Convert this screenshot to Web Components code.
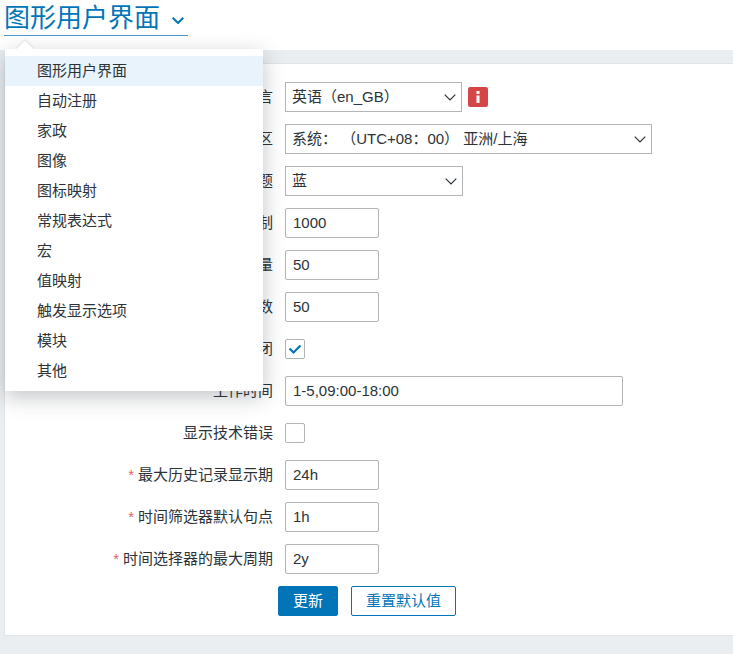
<!DOCTYPE html>
<html lang="zh">
<head>
<meta charset="utf-8">
<title>图形用户界面</title>
<style>
   html, body { margin: 0; height: 100%; }
   body {
      background-color: #ebeef0;
      color: #2b3338;
      font: 15px/18px "Liberation Sans", "Noto Sans CJK SC", sans-serif;
      overflow: hidden;
   }
</style>
</head>
<body>
<zbx-page>
   <zbx-header slot="header">图形用户界面</zbx-header>
   <zbx-menu slot="menu">
      <zbx-menu-item selected>图形用户界面</zbx-menu-item>
      <zbx-menu-item>自动注册</zbx-menu-item>
      <zbx-menu-item>家政</zbx-menu-item>
      <zbx-menu-item>图像</zbx-menu-item>
      <zbx-menu-item>图标映射</zbx-menu-item>
      <zbx-menu-item>常规表达式</zbx-menu-item>
      <zbx-menu-item>宏</zbx-menu-item>
      <zbx-menu-item>值映射</zbx-menu-item>
      <zbx-menu-item>触发显示选项</zbx-menu-item>
      <zbx-menu-item>模块</zbx-menu-item>
      <zbx-menu-item>其他</zbx-menu-item>
   </zbx-menu>

   <zbx-row label="默认语言">
      <zbx-select width="177" value="英语（en_GB）"></zbx-select>
      <zbx-info></zbx-info>
   </zbx-row>
   <zbx-row label="默认时区">
      <zbx-select width="367" value="系统： （UTC+08：00） 亚洲/上海"></zbx-select>
   </zbx-row>
   <zbx-row label="默认主题">
      <zbx-select width="178" value="蓝"></zbx-select>
   </zbx-row>
   <zbx-row label="搜索数量限制" required>
      <zbx-input width="94" value="1000"></zbx-input>
   </zbx-row>
   <zbx-row label="最大显示数量" required>
      <zbx-input width="94" value="50"></zbx-input>
   </zbx-row>
   <zbx-row label="最大元素数" required>
      <zbx-input width="94" value="50"></zbx-input>
   </zbx-row>
   <zbx-row label="显示服务器关闭">
      <zbx-check checked></zbx-check>
   </zbx-row>
   <zbx-row label="工作时间" required>
      <zbx-input width="338" value="1-5,09:00-18:00"></zbx-input>
   </zbx-row>
   <zbx-row label="显示技术错误">
      <zbx-check></zbx-check>
   </zbx-row>
   <zbx-row label="最大历史记录显示期" required>
      <zbx-input width="94" value="24h"></zbx-input>
   </zbx-row>
   <zbx-row label="时间筛选器默认句点" required>
      <zbx-input width="94" value="1h"></zbx-input>
   </zbx-row>
   <zbx-row label="时间选择器的最大周期" required>
      <zbx-input width="94" value="2y"></zbx-input>
   </zbx-row>
   <zbx-row>
      <zbx-button primary>更新</zbx-button>
      <zbx-button>重置默认值</zbx-button>
   </zbx-row>
</zbx-page>

<script>
const chevron = (width, height, color, stroke) => `
   <svg width="${width}" height="${height}" viewBox="0 0 ${width} ${height}" fill="none" aria-hidden="true">
      <path d="M.7 .7 L${width / 2} ${height - 1} L${width - .7} .7" stroke="${color}" stroke-width="${stroke}"/>
   </svg>`;

class ZbxPage extends HTMLElement {
   constructor() {
      super();
      this.attachShadow({mode: 'open'}).innerHTML = `
      <style>
         :host { display: block; position: relative; height: 654px; }
         .card {
            display: flex;
            flex-direction: column;
            gap: 12px;
            margin: 13px 0 0 4px;
            height: 553px;
            padding: 18px 0 0;
            background-color: #fff;
            border: 1px solid #dfe4e7;
            border-right: none;
         }
      </style>
      <slot name="header"></slot>
      <div class="card"><slot></slot></div>
      <slot name="menu"></slot>`;
   }
}

class ZbxHeader extends HTMLElement {
   constructor() {
      super();
      this.attachShadow({mode: 'open'}).innerHTML = `
      <style>
         :host { display: block; height: 50px; background-color: #fff; box-sizing: border-box; padding-left: 4px; }
         a {
            display: inline-flex;
            align-items: center;
            gap: 12px;
            height: 36px;
            box-sizing: border-box;
            padding: 0 4px 0 0;
            color: #0275b8;
            border-bottom: 1px solid #4b9bcb;
            font-size: 26px;
            line-height: 36px;
         }
         svg { margin-top: 6px; }
      </style>
      <a><slot></slot>${chevron(12, 7, '#0275b8', 2)}</a>`;
   }
}

class ZbxMenu extends HTMLElement {
   constructor() {
      super();
      this.attachShadow({mode: 'open'}).innerHTML = `
      <style>
         :host {
            display: block;
            position: absolute;
            left: 5px;
            top: 49px;
            width: 258px;
            padding: 7px 0 5px;
            background-color: #fff;
            box-shadow: 0 6px 20px rgba(31, 44, 51, .28);
         }
         .arrow {
            position: absolute;
            left: 14px;
            top: -6px;
            width: 12px;
            height: 12px;
            background-color: #fff;
            transform: rotate(45deg);
            box-shadow: -1px -1px 2px rgba(31, 44, 51, .1);
         }
      </style>
      <div class="arrow"></div>
      <slot></slot>`;
   }
}

class ZbxMenuItem extends HTMLElement {
   constructor() {
      super();
      this.attachShadow({mode: 'open'}).innerHTML = `
      <style>
         :host { display: block; position: relative; height: 30px; padding-left: 32px; line-height: 29px; }
         :host([selected]) { background-color: #e8f3fb; }
      </style>
      <slot></slot>`;
   }
}

class ZbxRow extends HTMLElement {
   constructor() {
      super();
      this.attachShadow({mode: 'open'}).innerHTML = `
      <style>
         :host { display: flex; align-items: center; height: 30px; }
         label { flex: 0 0 268px; padding-right: 12px; text-align: right; white-space: nowrap; }
         i { font-style: normal; color: #e5646a; margin-right: 4px; }
         .field { display: flex; align-items: center; gap: 6px; }
      </style>
      <label></label>
      <div class="field"><slot></slot></div>`;
   }

   connectedCallback() {
      let label = this.shadowRoot.querySelector('label');
      if (this.hasAttribute('required')) {
         label.innerHTML = '<i>*</i>';
      }
      label.append(this.getAttribute('label') || '');
      if (!this.hasAttribute('label')) {
         this.shadowRoot.querySelector('.field').style.cssText = 'gap: 13px; margin-left: -7px;';
      }
   }
}

class ZbxSelect extends HTMLElement {
   constructor() {
      super();
      this.attachShadow({mode: 'open'}).innerHTML = `
      <style>
         :host { display: flex; align-items: center; justify-content: space-between; box-sizing: border-box; height: 30px; padding: 0 5px 0 6px; background: #fff; border: 1px solid #b0b4b6; white-space: pre; }
         svg { margin-top: 1px; }
      </style>
      <span></span>${chevron(12, 7, '#2b3338', 1.2)}`;
   }

   connectedCallback() {
      this.style.width = this.getAttribute('width') + 'px';
      this.shadowRoot.querySelector('span').textContent = this.getAttribute('value');
   }
}

class ZbxInput extends HTMLElement {
   constructor() {
      super();
      this.attachShadow({mode: 'open'}).innerHTML = `
      <style>
         :host { display: block; box-sizing: border-box; height: 30px; padding: 0 7px; background: #fff; border: 1px solid #b0b4b6; border-radius: 2px; line-height: 28px; }
      </style>
      <span></span>`;
   }

   connectedCallback() {
      this.style.width = this.getAttribute('width') + 'px';
      this.shadowRoot.querySelector('span').textContent = this.getAttribute('value');
   }
}

class ZbxCheck extends HTMLElement {
   constructor() {
      super();
      this.attachShadow({mode: 'open'}).innerHTML = `
      <style>
         :host { display: block; box-sizing: border-box; width: 20px; height: 20px; background: #fff; border: 1px solid #b0b4b6; border-radius: 2px; }
         svg { display: none; }
         :host([checked]) svg { display: block; }
      </style>
      <svg width="18" height="18" viewBox="0 0 18 18" fill="none" aria-hidden="true">
         <path d="M3.5 8.5 L7.5 12.5 L14.5 5.5" stroke="#0275b8" stroke-width="2.2"/>
      </svg>`;
   }
}

class ZbxInfo extends HTMLElement {
   constructor() {
      super();
      this.attachShadow({mode: 'open'}).innerHTML = `
      <style>
         :host { display: block; width: 20px; height: 20px; border-radius: 2px; background: #d64545; }
         svg { display: block; }
      </style>
      <svg width="20" height="20" viewBox="0 0 20 20" fill="#fff" aria-hidden="true">
         <rect x="8.5" y="4" width="3" height="3"/>
         <rect x="8.5" y="8.5" width="3" height="7.5"/>
      </svg>`;
   }
}

class ZbxButton extends HTMLElement {
   constructor() {
      super();
      this.attachShadow({mode: 'open'}).innerHTML = `
      <style>
         :host { display: block; box-sizing: border-box; height: 30px; padding: 0 14px; border: 1px solid #0275b8; border-radius: 2px; line-height: 28px; background: #fff; color: #0275b8; }
         :host([primary]) { background: #0275b8; color: #fff; }
      </style>
      <slot></slot>`;
   }
}

customElements.define('zbx-page', ZbxPage);
customElements.define('zbx-header', ZbxHeader);
customElements.define('zbx-menu', ZbxMenu);
customElements.define('zbx-menu-item', ZbxMenuItem);
customElements.define('zbx-row', ZbxRow);
customElements.define('zbx-select', ZbxSelect);
customElements.define('zbx-input', ZbxInput);
customElements.define('zbx-check', ZbxCheck);
customElements.define('zbx-info', ZbxInfo);
customElements.define('zbx-button', ZbxButton);
</script>
</body>
</html>
